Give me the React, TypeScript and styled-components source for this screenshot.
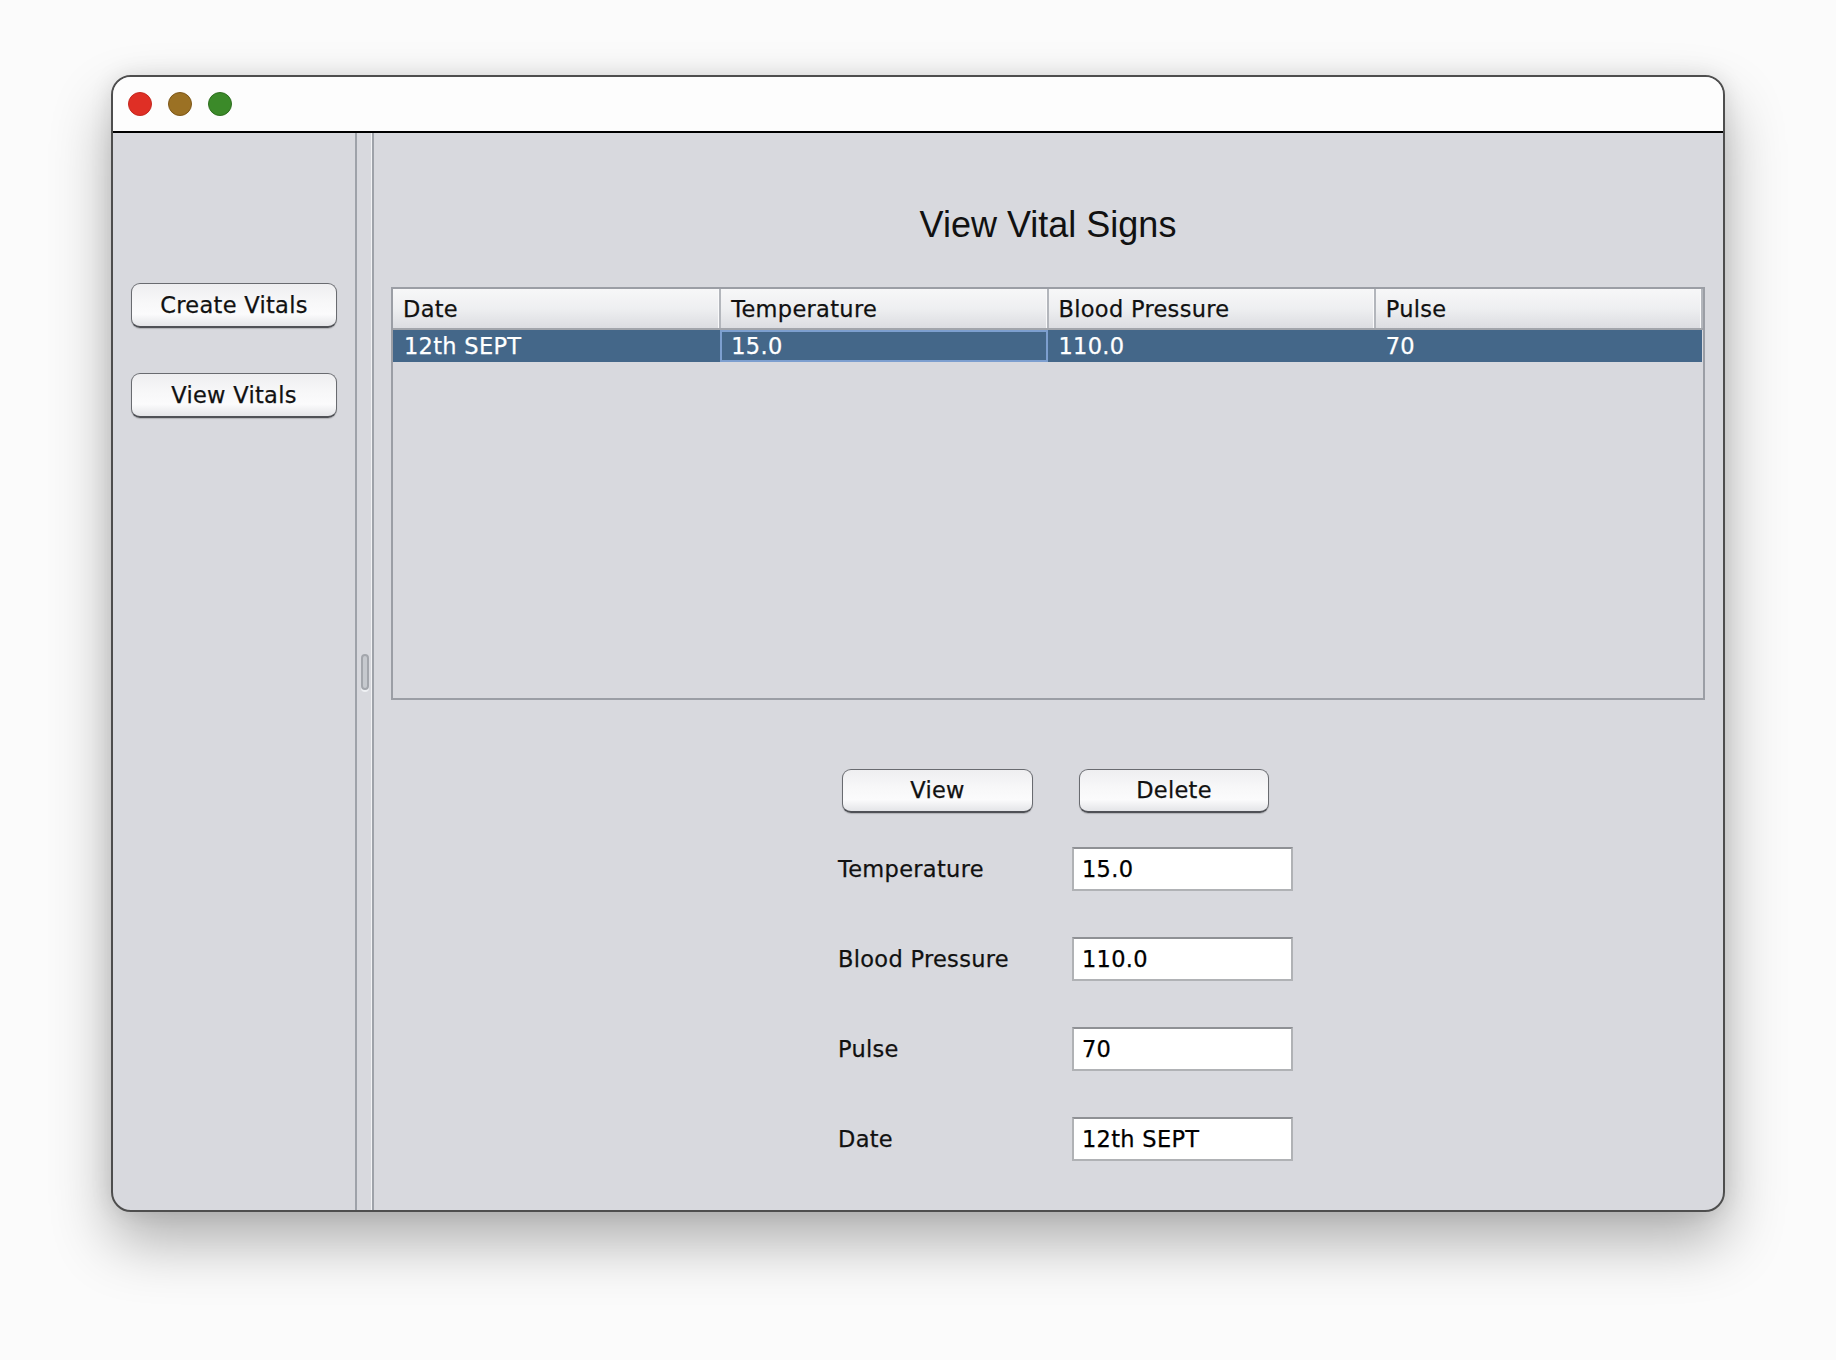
import React from "react";
import styled, { createGlobalStyle, css } from "styled-components";

const GlobalStyle = createGlobalStyle`
  html, body {
    margin: 0;
    padding: 0;
    background: #fbfbfb;
  }
  body {
    font-family: "DejaVu Sans", "Liberation Sans", sans-serif;
  }
  * { box-sizing: border-box; }
`;

const uiText = css`
  font-family: "DejaVu Sans", "Liberation Sans", sans-serif;
  font-size: 22.5px;
  letter-spacing: 0.3px;
  -webkit-text-stroke: 0.25px currentColor;
`;

const Page = styled.div`
  width: 1836px;
  height: 1360px;
  padding: 75px 0 0 111px;
  background: #fbfbfb;
  overflow: hidden;
`;

const Window = styled.div`
  width: 1614px;
  height: 1137px;
  border: 2px solid #4e4e4e;
  border-radius: 20px;
  overflow: hidden;
  display: flex;
  flex-direction: column;
  background: #d8d9de;
  box-shadow: 0 30px 60px rgba(0, 0, 0, 0.3), 0 0 22px rgba(0, 0, 0, 0.1);
`;

const TitleBar = styled.div`
  height: 56px;
  flex-shrink: 0;
  display: flex;
  align-items: center;
  gap: 16px;
  padding-left: 15px;
  background: #fdfdfd;
  border-bottom: 2px solid #000;
`;

const Light = styled.span<{ $fill: string; $edge: string }>`
  width: 24px;
  height: 24px;
  border-radius: 50%;
  background: ${(p) => p.$fill};
  border: 1px solid ${(p) => p.$edge};
`;

const Body = styled.div`
  flex: 1;
  display: flex;
  min-height: 0;
`;

const Sidebar = styled.div`
  width: 242px;
  flex-shrink: 0;
  display: flex;
  flex-direction: column;
  align-items: flex-start;
  gap: 45px;
  padding: 150px 0 0 18px;
`;

const PushButton = styled.button<{ $w: number; $h: number }>`
  ${uiText};
  width: ${(p) => p.$w}px;
  height: ${(p) => p.$h}px;
  padding: 0;
  border: 1.5px solid #696b70;
  border-bottom: 2px solid #4f5156;
  border-radius: 9px;
  background: linear-gradient(
    to bottom,
    #eeeef0 0%,
    #f7f7f8 40%,
    #fbfbfc 72%,
    #e4e5e8 100%
  );
  box-shadow: 0 1px 1px rgba(0, 0, 0, 0.18);
  color: #111;
  line-height: 1;
  cursor: default;
`;

const Divider = styled.div`
  width: 19px;
  flex-shrink: 0;
  border-left: 2px solid #9ea2a9;
  border-right: 2px solid #9ea2a9;
  box-shadow: inset -1px 0 0 #f2f3f5;
  display: flex;
  align-items: center;
  justify-content: center;
`;

const Handle = styled.div`
  width: 8px;
  height: 36px;
  border: 2px solid #a3a6ac;
  border-radius: 4px;
  background: #c6c9ce;
  box-shadow: 0 2px 0 #eef0f3;
`;

const Content = styled.div`
  flex: 1;
  display: flex;
  flex-direction: column;
  padding: 74px 18px 0 17px;
  min-width: 0;
`;

const Title = styled.h1`
  margin: 0;
  font-family: "Liberation Sans", Arial, sans-serif;
  font-weight: 400;
  font-size: 36px;
  line-height: 36px;
  text-align: center;
  color: #111;
`;

const TableFrame = styled.div`
  margin-top: 44px;
  height: 413px;
  border: 2px solid #9b9ea5;
  background: #d8d9de;
`;

const Grid = styled.table`
  ${uiText};
  width: 100%;
  border-collapse: collapse;
  table-layout: fixed;
`;

const HeadCell = styled.th`
  height: 40px;
  padding: 0 0 0 10px;
  text-align: left;
  font-weight: 400;
  color: #111;
  background: linear-gradient(to bottom, #f7f7f8 0%, #eeeff1 50%, #dcdde1 100%);
  border-bottom: 2px solid #a2a5ab;
  border-right: 2px solid #b3b6bc;
  box-shadow: inset -1px 0 0 #fafafb;
  white-space: nowrap;
`;

const Row = styled.tr<{ $selected?: boolean }>`
  background: ${(p) => (p.$selected ? "#446789" : "transparent")};
  color: ${(p) => (p.$selected ? "#ffffff" : "#111")};
`;

const Cell = styled.td<{ $focus?: boolean }>`
  height: 33px;
  padding: 0 0 0 11px;
  white-space: nowrap;
  box-shadow: ${(p) => (p.$focus ? "inset 0 0 0 2px #7d9fcf" : "none")};
`;

const Form = styled.div`
  margin: 69px 0 0 447px;
  display: flex;
  flex-direction: column;
`;

const ActionRow = styled.div`
  display: flex;
  gap: 46px;
  padding-left: 4px;
  margin-bottom: 34px;
`;

const FieldGrid = styled.div`
  display: grid;
  grid-template-columns: 234px 221px;
  grid-auto-rows: 44px;
  row-gap: 46px;
  align-items: center;
`;

const Label = styled.label`
  ${uiText};
  color: #111;
  white-space: nowrap;
`;

const TextField = styled.input`
  ${uiText};
  width: 221px;
  height: 44px;
  margin: 0;
  padding: 0 8px;
  border: 2px solid #b0b2b5;
  border-top-color: #8f9195;
  background: #ffffff;
  color: #000;
  outline: none;
`;

const columns = ["Date", "Temperature", "Blood Pressure", "Pulse"];
const record = { date: "12th SEPT", temperature: "15.0", pressure: "110.0", pulse: "70" };

const fields = [
  { label: "Temperature", value: record.temperature },
  { label: "Blood Pressure", value: record.pressure },
  { label: "Pulse", value: record.pulse },
  { label: "Date", value: record.date },
];

export default function App() {
  return (
    <>
      <GlobalStyle />
      <Page>
        <Window>
          <TitleBar>
            <Light $fill="#df2f25" $edge="#c4281f" />
            <Light $fill="#9b7124" $edge="#7d5719" />
            <Light $fill="#3b8a29" $edge="#2e6e1f" />
          </TitleBar>
          <Body>
            <Sidebar>
              <PushButton $w={206} $h={45}>Create Vitals</PushButton>
              <PushButton $w={206} $h={45}>View Vitals</PushButton>
            </Sidebar>
            <Divider>
              <Handle />
            </Divider>
            <Content>
              <Title>View Vital Signs</Title>
              <TableFrame>
                <Grid>
                  <thead>
                    <tr>
                      {columns.map((c) => (
                        <HeadCell key={c}>{c}</HeadCell>
                      ))}
                    </tr>
                  </thead>
                  <tbody>
                    <Row $selected>
                      <Cell>{record.date}</Cell>
                      <Cell $focus>{record.temperature}</Cell>
                      <Cell>{record.pressure}</Cell>
                      <Cell>{record.pulse}</Cell>
                    </Row>
                  </tbody>
                </Grid>
              </TableFrame>
              <Form>
                <ActionRow>
                  <PushButton $w={191} $h={44}>View</PushButton>
                  <PushButton $w={190} $h={44}>Delete</PushButton>
                </ActionRow>
                <FieldGrid>
                  {fields.map((f) => (
                    <React.Fragment key={f.label}>
                      <Label>{f.label}</Label>
                      <TextField readOnly value={f.value} />
                    </React.Fragment>
                  ))}
                </FieldGrid>
              </Form>
            </Content>
          </Body>
        </Window>
      </Page>
    </>
  );
}
